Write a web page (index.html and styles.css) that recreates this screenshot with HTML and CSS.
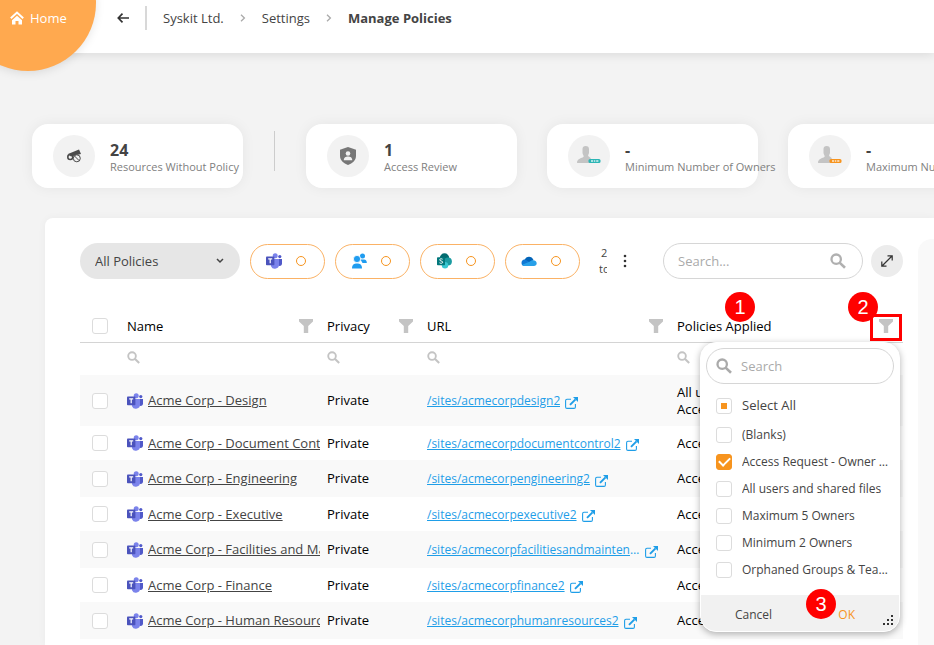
FILE: index.html
```html
<!DOCTYPE html>
<html lang="en">
<head>
<meta charset="utf-8">
<meta name="viewport" content="width=device-width, initial-scale=1">
<title>Manage Policies</title>
<link rel="stylesheet" href="styles.css">
</head>
<body>
<svg class="defs" aria-hidden="true">
  <symbol id="teams" viewBox="0 0 16 16">
    <circle cx="13.8" cy="3.6" r="1.6" fill="#5059c9"/>
    <path d="M11.6 6H16v5a2.3 2.3 0 0 1-4.4.6z" fill="#5059c9"/>
    <circle cx="9.2" cy="2.8" r="2.5" fill="#7b83eb"/>
    <path d="M5 6h8v5a4.2 4.2 0 0 1-8 2.200z" fill="#7b83eb"/>
    <rect x="0" y="3.6" width="8.4" height="8.6" rx=".8" fill="#4b53bc"/>
    <path d="M2.2 5.9h4M4.2 5.9v4.4" stroke="#fff" stroke-width="1.2" fill="none"/>
  </symbol>
  <symbol id="search" viewBox="0 0 16 16">
    <circle cx="6.2" cy="6.2" r="4.7" fill="none" stroke="currentColor" stroke-width="2.3"/>
    <path d="M9.6 9.6l5.4 5.2" stroke="currentColor" stroke-width="2.6"/>
  </symbol>
  <symbol id="funnel" viewBox="0 0 14 14">
    <path d="M0 0h14v2.4L9.2 7v7H4.8V7L0 2.4z" fill="currentColor"/>
  </symbol>
  <symbol id="external" viewBox="0 0 13 12">
    <path d="M6 2.2H2A1.5 1.5 0 0 0 .6 3.7v6.2a1.5 1.5 0 0 0 1.4 1.5h7a1.5 1.5 0 0 0 1.4-1.5V7" fill="none" stroke="currentColor" stroke-width="1.1"/>
    <path d="M5 7.8L10.5 2.3" stroke="currentColor" stroke-width="1.9"/>
    <path d="M8 0h5v5z" fill="currentColor"/>
  </symbol>
  <symbol id="crumb" viewBox="0 0 6 8">
    <path d="M1 .8L4.4 4 1 7.2" fill="none" stroke="#aaa" stroke-width="1.3"/>
  </symbol>
  <symbol id="person" viewBox="0 0 24 20">
    <path d="M5.500 3Q5.500 0 8.700 0T12 3V6.500c0 1.500-.8 2-.9 3 .3 1.500 2.900 1.500 2.900 4V17H0c0-5 5.200-4.500 6.700-6.500 0-1.500-1.200-2-1.200-4z" fill="#c4c4c4"/>
    <rect x="11.5" y="13" width="12" height="4" rx="1.500" fill="currentColor"/>
    <path d="M14 15h2M16.800 15h1.500M19.200 15h2.200" stroke="#fff" stroke-width="1.6" opacity=".8"/>
  </symbol>
</svg>

<header class="topbar">
  <a class="home" href="#">
    <svg width="14" height="14" viewBox="0 0 14 14"><path d="M.8 7.3L7 1.500l6.200 5.800" fill="none" stroke="#fff" stroke-width="2"/><path d="M2 9.300l5-4.600 5 4.600V13.500H8.500V10h-3v3.500H2z" fill="#fff"/></svg>
    Home
  </a>
  <nav class="crumbs" aria-label="Breadcrumb">
    <button class="back" type="button" aria-label="Back"><svg width="12" height="10" viewBox="0 0 12 10"><path d="M5.5.7L1.3 5l4.200 4.300M1.300 5H12" fill="none" stroke="#333" stroke-width="1.7"/></svg></button>
    <a href="#">Syskit Ltd.</a>
    <svg width="6" height="8"><use href="#crumb"/></svg>
    <a href="#">Settings</a>
    <svg width="6" height="8"><use href="#crumb"/></svg>
    <strong>Manage Policies</strong>
  </nav>
</header>

<section class="stats">
  <article class="card">
    <span class="card-icon"><svg width="14" height="14" viewBox="0 0 14 14"><path d="M1 5L12 .5 14 5 4 7.500z" fill="#4a4a4a"/><circle cx="3.300" cy="8" r="2.500" fill="none" stroke="#4a4a4a" stroke-width="1.600"/><circle cx="9.800" cy="9.300" r="3.500" fill="#f2f2f2" stroke="#4a4a4a"/><path d="M7.500 7l4.700 4.700" stroke="#4a4a4a"/></svg></span>
    <div><strong>24</strong><p>Resources Without Policy</p></div>
  </article>
  <span class="stats-divider"></span>
  <article class="card">
    <span class="card-icon"><svg width="16" height="18" viewBox="0 0 16 18"><path d="M8 0l8 2.700V9c0 4-3.500 7.500-8 9-4.500-1.500-8-5-8-9V2.700z" fill="#777"/><circle cx="8" cy="6.500" r="2.300" fill="#f2f2f2"/><path d="M3.800 13.200c0-3 2-3.800 4.200-3.800s4.200.8 4.200 3.800z" fill="#f2f2f2"/></svg></span>
    <div><strong>1</strong><p>Access Review</p></div>
  </article>
  <article class="card">
    <span class="card-icon min"><svg width="24" height="20"><use href="#person"/></svg></span>
    <div><strong>-</strong><p>Minimum Number of Owners</p></div>
  </article>
  <article class="card">
    <span class="card-icon max"><svg width="24" height="20"><use href="#person"/></svg></span>
    <div><strong>-</strong><p>Maximum Number of Owners</p></div>
  </article>
</section>

<main class="panel">
  <div class="content">
    <div class="toolbar">
      <div class="policy-select">
        <select aria-label="Policies"><option>All Policies</option></select>
        <svg width="8" height="6" viewBox="0 0 8 6"><path d="M1 1l3 3 3-3" fill="none" stroke="#444" stroke-width="1.5"/></svg>
      </div>
      <button class="pill" type="button" aria-label="Teams"><svg width="16" height="16"><use href="#teams"/></svg><i></i></button>
      <button class="pill" type="button" aria-label="Groups"><svg width="16" height="16" viewBox="0 0 16 16" fill="#1f9cf0"><circle cx="11.500" cy="3" r="2.500"/><path d="M9.500 6.500h3.500c2 0 2.800 1.500 2.800 3.500h-4.300z"/><circle cx="6" cy="6" r="3.600" stroke="#fff" stroke-width=".8"/><path d="M1 15.500c0-4 2-5 5-5s5 1 5 5z"/></svg><i></i></button>
      <button class="pill" type="button" aria-label="SharePoint"><svg width="16" height="16" viewBox="0 0 16 16"><circle cx="8.500" cy="5" r="4.700" fill="#036c70"/><circle cx="12" cy="8.500" r="3.900" fill="#1a9ba1"/><circle cx="9" cy="12.300" r="3.200" fill="#37c6d0"/><rect x="1" y="4.200" width="8" height="8" rx=".8" fill="#03787c"/><path d="M6.600 6.200c-1-.7-2.900-.5-2.900.6 0 1.500 3 .9 3 2.400 0 1.200-2 1.400-3.200.6" fill="none" stroke="#fff" stroke-width="1"/></svg><i></i></button>
      <button class="pill" type="button" aria-label="OneDrive"><svg width="16" height="16" viewBox="0 0 16 16"><path d="M3.500 7C5 2.500 11 2.500 12.500 7L9 10z" fill="#0364b8"/><path d="M.5 10C.5 7 3 5.800 5 7l5 3-4 3H3.500A3 3 0 0 1 .5 10z" fill="#0f78d4"/><path d="M9 8.500c1.500-2 6.700-2 6.700 1.800 0 2-1.300 2.700-2.700 2.700H3.500c-1 0-1.800-.5-2.300-1.200z" fill="#28a0e8"/></svg><i></i></button>
      <span class="count">24 to</span>
      <button class="kebab" type="button" aria-label="More"><svg width="4" height="14" viewBox="0 0 4 14" fill="#333"><circle cx="2" cy="2" r="1.300"/><circle cx="2" cy="7" r="1.300"/><circle cx="2" cy="12" r="1.300"/></svg></button>
      <label class="search"><input type="text" placeholder="Search..." aria-label="Search"><svg width="16" height="16"><use href="#search"/></svg></label>
      <button class="expand" type="button" aria-label="Expand"><svg width="12" height="12" viewBox="0 0 12 12" fill="none" stroke="#333" stroke-width="1.2"><path d="M1 11L11 1M6.500.8h4.700v4.700M.8 6.500v4.700h4.700"/></svg></button>
    </div>

    <div class="grid-wrap">
      <table>
        <colgroup><col class="c-check"><col class="c-name"><col class="c-privacy"><col class="c-url"><col></colgroup>
        <thead>
          <tr class="heads">
            <th><input type="checkbox" aria-label="Select all rows"></th>
            <th><div>Name<svg width="14" height="14"><use href="#funnel"/></svg></div></th>
            <th><div>Privacy<svg width="14" height="14"><use href="#funnel"/></svg></div></th>
            <th><div>URL<svg width="14" height="14"><use href="#funnel"/></svg></div></th>
            <th class="last"><div>Policies Applied<svg width="14" height="14"><use href="#funnel"/></svg></div></th>
          </tr>
          <tr class="filters">
            <td></td>
            <td><svg width="13" height="13"><use href="#search"/></svg></td>
            <td><svg width="13" height="13"><use href="#search"/></svg></td>
            <td><svg width="13" height="13"><use href="#search"/></svg></td>
            <td><svg width="13" height="13"><use href="#search"/></svg></td>
          </tr>
        </thead>
        <tbody>
          <tr><td><input type="checkbox" aria-label="Design"></td><td><span class="name"><svg width="16" height="16"><use href="#teams"/></svg><a href="#">Acme Corp - Design</a></span></td><td>Private</td><td><span class="url"><a href="#">/sites/acmecorpdesign2</a><svg width="13" height="12"><use href="#external"/></svg></span></td><td>All users<br>Access</td></tr>
          <tr><td><input type="checkbox" aria-label="Document Control"></td><td><span class="name"><svg width="16" height="16"><use href="#teams"/></svg><a href="#">Acme Corp - Document Control</a></span></td><td>Private</td><td><span class="url"><a href="#">/sites/acmecorpdocumentcontrol2</a><svg width="13" height="12"><use href="#external"/></svg></span></td><td>Access</td></tr>
          <tr><td><input type="checkbox" aria-label="Engineering"></td><td><span class="name"><svg width="16" height="16"><use href="#teams"/></svg><a href="#">Acme Corp - Engineering</a></span></td><td>Private</td><td><span class="url"><a href="#">/sites/acmecorpengineering2</a><svg width="13" height="12"><use href="#external"/></svg></span></td><td>Access</td></tr>
          <tr><td><input type="checkbox" aria-label="Executive"></td><td><span class="name"><svg width="16" height="16"><use href="#teams"/></svg><a href="#">Acme Corp - Executive</a></span></td><td>Private</td><td><span class="url"><a href="#">/sites/acmecorpexecutive2</a><svg width="13" height="12"><use href="#external"/></svg></span></td><td>Access</td></tr>
          <tr><td><input type="checkbox" aria-label="Facilities and Maintenance"></td><td><span class="name"><svg width="16" height="16"><use href="#teams"/></svg><a href="#">Acme Corp - Facilities and Maintenance</a></span></td><td>Private</td><td><span class="url"><a href="#">/sites/acmecorpfacilitiesandmaintenance2</a><svg width="13" height="12"><use href="#external"/></svg></span></td><td>Access</td></tr>
          <tr><td><input type="checkbox" aria-label="Finance"></td><td><span class="name"><svg width="16" height="16"><use href="#teams"/></svg><a href="#">Acme Corp - Finance</a></span></td><td>Private</td><td><span class="url"><a href="#">/sites/acmecorpfinance2</a><svg width="13" height="12"><use href="#external"/></svg></span></td><td>Access</td></tr>
          <tr><td><input type="checkbox" aria-label="Human Resources"></td><td><span class="name"><svg width="16" height="16"><use href="#teams"/></svg><a href="#">Acme Corp - Human Resources</a></span></td><td>Private</td><td><span class="url"><a href="#">/sites/acmecorphumanresources2</a><svg width="13" height="12"><use href="#external"/></svg></span></td><td>Access</td></tr>
        </tbody>
      </table>

      <form class="popup">
        <label class="popup-search"><svg width="16" height="16"><use href="#search"/></svg><input type="text" placeholder="Search" aria-label="Search values"></label>
        <label class="option all"><input class="partial" type="checkbox"><span>Select All</span></label>
        <label class="option"><input type="checkbox"><span>(Blanks)</span></label>
        <label class="option"><input type="checkbox" checked><span>Access Request - Owner Approval</span></label>
        <label class="option"><input type="checkbox"><span>All users and shared files</span></label>
        <label class="option"><input type="checkbox"><span>Maximum 5 Owners</span></label>
        <label class="option"><input type="checkbox"><span>Minimum 2 Owners</span></label>
        <label class="option"><input type="checkbox"><span>Orphaned Groups &amp; Teams Policy</span></label>
        <footer>
          <button type="button">Cancel</button>
          <button class="ok" type="button">OK</button>
          <svg width="11" height="11" viewBox="0 0 11 11" fill="#333"><path d="M9 0h2v2H9zM9 4h2v2H9zM9 8h2v2H9zM5 4h2v2H5zM5 8h2v2H5zM1 8h2v2H1z"/></svg>
          <b class="badge three">3</b>
        </footer>
      </form>
      <span class="outline"></span>
      <b class="badge one">1</b>
      <b class="badge two">2</b>
    </div>
  </div>
  <aside class="side"></aside>
</main>
</body>
</html>
```
FILE: styles.css
```css
* { box-sizing: border-box; }

body {
  margin: 0;
  height: 100vh;
  overflow: hidden;
  display: flex;
  flex-direction: column;
  background: #f3f3f3;
  color: #444;
  font: 13px/17px "Open Sans", "Noto Sans", sans-serif;
}

a { color: inherit; text-decoration: none; }
p { margin: 0; }
svg { flex: none; display: block; }
button, input, select { font: inherit; color: inherit; }
button { border: 0; padding: 0; background: none; }
.defs { position: absolute; width: 0; height: 0; }

/* Top bar */
.topbar {
  flex: none;
  position: relative;
  height: 53px;
  padding-left: 117px;
  background: #fff;
  box-shadow: 0 2px 10px rgba(0, 0, 0, .1);
}
.home {
  position: absolute;
  left: -40px;
  top: -65px;
  width: 136px;
  height: 136px;
  padding: 75px 0 0 50px;
  display: flex;
  gap: 6px;
  border-radius: 50%;
  background: #ffa94f;
  color: #fff;
  box-shadow: 0 2px 10px rgba(0, 0, 0, .1);
}
.home svg { margin-top: 1px; }
.crumbs { display: flex; align-items: center; height: 36px; }
.crumbs > svg { margin: 0 16px; }
.back { width: 30px; height: 24px; border-right: 2px solid #d8d8d8; margin-right: 16px; }

/* Summary cards */
.stats {
  flex: none;
  display: flex;
  align-items: center;
  gap: 30px;
  padding: 71px 32px 30px;
  overflow: hidden;
}
.card {
  flex: none;
  display: flex;
  align-items: center;
  gap: 15px;
  width: 211px;
  height: 64px;
  padding-left: 21px;
  border-radius: 16px;
  background: #fff;
  box-shadow: 0 0 14px rgba(0, 0, 0, .06);
  white-space: nowrap;
}
.card-icon {
  flex: none;
  display: grid;
  place-items: center;
  width: 42px;
  height: 42px;
  border-radius: 50%;
  background: #f2f2f2;
}
.min { color: #2cb5b5; }
.max { color: #f7941e; }
.card div { padding-top: 5px; }
.card strong { display: block; font-size: 16px; line-height: 16px; }
.card p { color: #808080; font-size: 11px; }
.stats-divider { flex: none; width: 1px; height: 40px; margin: 0 1px 11px; background: #ccc; }

/* Main panel */
.panel {
  flex: 1 0 auto;
  display: flex;
  margin-left: 45px;
  border-top-left-radius: 8px;
  background: #fff;
  box-shadow: 0 0 8px rgba(0, 0, 0, .04);
}
.content { flex: 1; min-width: 0; padding: 25px 15px 0 35px; }
.side { width: 16px; margin-top: 21px; border-top-left-radius: 14px; background: #f9f9f9; }

.toolbar { display: flex; align-items: center; gap: 10px; height: 36px; }
.policy-select { display: grid; align-items: center; width: 160px; }
.policy-select > * { grid-area: 1 / 1; }
.policy-select select {
  appearance: none;
  height: 36px;
  padding: 0 15px;
  border: 0;
  border-radius: 18px;
  background: #e6e6e6;
}
.policy-select svg { justify-self: end; margin-right: 16px; pointer-events: none; }
.pill {
  display: flex;
  align-items: center;
  justify-content: center;
  gap: 14px;
  width: 75px;
  height: 35px;
  padding-right: 4px;
  border: 1px solid #fbb265;
  border-radius: 18px;
}
.pill i { width: 10px; height: 10px; border: 1px solid #f7941e; border-radius: 50%; }
.count { width: 8px; margin-left: 9px; overflow: hidden; font-size: 11px; line-height: 16px; text-indent: 2px; }
.kebab { width: 16px; display: grid; place-items: center; }
.search {
  display: flex;
  align-items: center;
  width: 200px;
  height: 36px;
  margin-left: auto;
  padding: 0 16px 0 14px;
  border: 1px solid #d6d6d6;
  border-radius: 18px;
  color: #b0b0b0;
}
.search input, .popup-search input {
  flex: 1;
  min-width: 0;
  padding: 0;
  border: 0;
  outline: 0;
  background: none;
}
::placeholder { color: #aaa; opacity: 1; }
.expand {
  display: grid;
  place-items: center;
  width: 32px;
  height: 32px;
  margin-left: -2px;
  border-radius: 50%;
  background: #ececec;
}

/* Table */
.grid-wrap { position: relative; margin-top: 32px; }
table { width: 100%; table-layout: fixed; border-collapse: collapse; color: #000; }
.c-check { width: 40px; }
.c-name { width: 200px; }
.c-privacy { width: 100px; }
.c-url { width: 250px; }
th, td { padding: 0 0 0 7px; text-align: left; font-weight: 400; white-space: nowrap; }
.heads { height: 31px; border-bottom: 1px solid #d4d4d4; }
.heads div { display: flex; align-items: center; justify-content: space-between; padding-right: 7px; }
.heads .last div { padding-right: 10px; }
.heads svg { color: #c4c4c4; }
.filters { height: 33px; vertical-align: top; }
.filters td { padding-top: 8px; }
.filters svg { color: #c4c4c4; }
tbody tr { height: 34px; }
tbody tr:nth-child(odd) { height: 37px; background: #f9f9f9; }
tbody tr:first-child { height: 51px; }
th:first-child, td:first-child { padding-left: 12px; }
.name { display: flex; align-items: center; gap: 5px; color: #444; }
.name a { min-width: 0; overflow: hidden; text-decoration: underline; }
.url { display: flex; align-items: center; gap: 5px; padding-right: 12px; color: #1f9ee8; font-size: 12px; }
.url a { overflow: hidden; text-overflow: ellipsis; text-decoration: underline; }
.url svg { margin-top: 4px; }

input[type="checkbox"] {
  appearance: none;
  flex: none;
  display: grid;
  place-items: center;
  width: 16px;
  height: 16px;
  margin: 0;
  border: 1px solid #dcdcdc;
  border-radius: 3px;
  background: #fff;
}
input[type="checkbox"]:checked { border-color: #f7941e; background: #f7941e; }
input[type="checkbox"]:checked::after {
  content: "";
  width: 9px;
  height: 5px;
  margin-bottom: 3px;
  border: solid #fff;
  border-width: 0 0 2px 2px;
  transform: rotate(-45deg);
}
.partial::after { content: ""; width: 6px; height: 6px; background: #f7941e; }

/* Filter popup */
.popup {
  position: absolute;
  top: 31px;
  right: 3px;
  width: 200px;
  padding: 5px 5px 0;
  border: 1px solid #fff;
  border-radius: 16px;
  background: #fff;
  box-shadow: 0 2px 7px rgba(0, 0, 0, .3);
}
.popup-search {
  display: flex;
  align-items: center;
  gap: 9px;
  height: 36px;
  margin-bottom: 8px;
  padding: 0 9px;
  border: 1px solid #d6d6d6;
  border-radius: 18px;
  color: #aaa;
}
.option { display: flex; align-items: center; gap: 10px; height: 27px; padding: 0 2px 0 10px; font-size: 12px; }
.option span { overflow: hidden; text-overflow: ellipsis; white-space: nowrap; }
.all { margin-bottom: 2px; font-size: 13px; }
.popup footer {
  position: relative;
  display: flex;
  align-items: center;
  height: 36px;
  margin: 12px -5px 0;
  padding: 2px 6px 0 34px;
  border-radius: 0 0 15px 15px;
  background: #f1f1f1;
  font-size: 12px;
}
.ok { margin: 0 27px 0 auto; color: #f7941e; }
.popup footer svg { margin-top: 12px; }

/* Step markers */
.badge {
  position: absolute;
  display: grid;
  place-items: center;
  width: 30px;
  height: 30px;
  border-radius: 50%;
  background: #f00;
  color: #fff;
  font: 20px/30px "Liberation Sans", sans-serif;
}
.one { top: -19px; right: 148px; }
.two { top: -19px; right: 25px; }
.three { top: -6px; right: 63px; }
.outline { position: absolute; top: 3px; right: 1px; width: 32px; height: 27px; border: 3px solid #f00; }
```
